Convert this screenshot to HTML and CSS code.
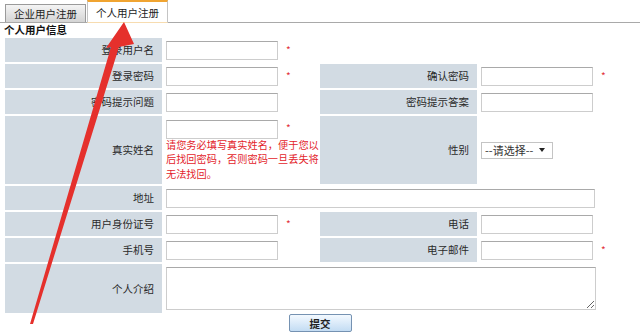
FILE: index.html
```html
<!DOCTYPE html>
<html lang="zh-CN">

<head>
    <meta charset="UTF-8">
    <meta name="viewport" content="width=device-width, initial-scale=1.0">
    <title>个人用户注册</title>
    <link rel="stylesheet" href="styles.css">
</head>

<body>
    <div class="tabs">
        <span class="tab">企业用户注册</span>
        <span class="tab active">个人用户注册</span>
    </div>
    <h4 class="title">个人用户信息</h4>

    <table class="reg-form">
        <colgroup>
            <col class="c-label">
            <col class="c-field">
            <col class="c-label">
            <col class="c-field2">
        </colgroup>
        <tr>
            <td class="label">登录用户名</td>
            <td class="field"><input type="text"><span class="star">*</span></td>
            <td colspan="2"></td>
        </tr>
        <tr>
            <td class="label">登录密码</td>
            <td class="field"><input type="password"><span class="star">*</span></td>
            <td class="label">确认密码</td>
            <td class="field"><input type="password"><span class="star">*</span></td>
        </tr>
        <tr>
            <td class="label">密码提示问题</td>
            <td class="field"><input type="text"></td>
            <td class="label">密码提示答案</td>
            <td class="field"><input type="text"></td>
        </tr>
        <tr class="tall">
            <td class="label">真实姓名</td>
            <td class="field top">
                <input type="text"><span class="star">*</span>
                <div class="hint">请您务必填写真实姓名，便于您以后找回密码，否则密码一旦丢失将无法找回。</div>
            </td>
            <td class="label">性别</td>
            <td class="field">
                <span class="select-wrap">
                    <select>
                        <option>--请选择--</option>
                        <option>男</option>
                        <option>女</option>
                    </select>
                </span>
            </td>
        </tr>
        <tr>
            <td class="label">地址</td>
            <td class="field" colspan="3"><input type="text" class="wide"></td>
        </tr>
        <tr>
            <td class="label">用户身份证号</td>
            <td class="field"><input type="text"><span class="star">*</span></td>
            <td class="label">电话</td>
            <td class="field"><input type="text"></td>
        </tr>
        <tr>
            <td class="label">手机号</td>
            <td class="field"><input type="text"></td>
            <td class="label">电子邮件</td>
            <td class="field"><input type="text"><span class="star">*</span></td>
        </tr>
        <tr class="intro">
            <td class="label">个人介绍</td>
            <td class="field" colspan="3"><textarea></textarea></td>
        </tr>
    </table>

    <button class="submit">提交</button>

    <!-- 标注箭头 -->
    <svg class="arrow" width="640" height="334" viewBox="0 0 640 334">
        <polygon fill="#e5302c"
            points="30,324 33,324 119,47 134,44 124,22 106,48 111,47" />
    </svg>
</body>

</html>
```

FILE: styles.css
```css
* {
    margin: 0;
    padding: 0;
    box-sizing: border-box;
}

body {
    position: relative;
    width: 640px;
    height: 334px;
    overflow: hidden;
    background-color: #fff;
    color: #2a2a2a;
    font-family: "Noto Sans CJK SC", "Liberation Sans", sans-serif;
    font-size: 10.5px;
    line-height: 14px;
}

.tabs {
    display: flex;
    align-items: flex-end;
    height: 23px;
    padding-left: 5px;
    gap: 1px;
    border-bottom: 1px solid #a9a9a9;
}

.tab {
    width: 81px;
    height: 18px;
    line-height: 17px;
    text-align: center;
    color: #222;
    border: 1px solid #9a9a9a;
    border-bottom: 0;
    background: linear-gradient(#f4f4f4, #d4d4d4);
}

.tab.active {
    height: 23px;
    line-height: 21px;
    margin-bottom: -1px;
    border-color: #c4c4c4;
    border-top: 2px solid #f0a431;
    border-bottom: 1px solid #f7dcb0;
    background: #fff;
}

.title {
    height: 13px;
    line-height: 13px;
    padding-left: 4px;
    font-size: 10.5px;
    font-weight: bold;
    color: #111;
}

.reg-form {
    width: 631px;
    margin-left: 5px;
    table-layout: fixed;
    border-collapse: separate;
    border-spacing: 0 2px;
}

.c-label {
    width: 157px;
}

.c-field {
    width: 158px;
}

.c-field2 {
    width: 159px;
}

.reg-form td {
    height: 24px;
    vertical-align: middle;
}

.reg-form .label {
    background-color: #d2dbe3;
    text-align: right;
    padding-right: 8px;
}

.reg-form .field {
    padding-left: 4px;
    line-height: 19px;
    white-space: nowrap;
}

.reg-form .tall td {
    height: 68px;
}

.reg-form .field.top {
    vertical-align: top;
    padding-top: 2px;
    white-space: normal;
}

.reg-form .intro td {
    height: 49px;
}

input,
textarea,
select {
    font-family: inherit;
    font-size: 10.5px;
    color: #333;
    outline: none;
    background: #fff;
    border: 1px solid #cdcdcd;
    border-top-color: #a9a9a9;
}

input {
    width: 112px;
    height: 19px;
    vertical-align: middle;
}

input.wide {
    width: 429px;
}

.star {
    display: inline-block;
    margin-left: 8px;
    color: #e2303a;
    font-size: 10px;
    line-height: 10px;
    vertical-align: 0;
}

.hint {
    width: 154px;
    margin-top: -1px;
    color: #e3242b;
    font-size: 10.2px;
    line-height: 14.5px;
}

.select-wrap {
    position: relative;
    display: inline-block;
    vertical-align: middle;
}

select {
    appearance: none;
    -webkit-appearance: none;
    width: 72px;
    height: 17px;
    padding-left: 3px;
    line-height: 15px;
    font-size: 11px;
    border-color: #c4c4c4;
}

.select-wrap::after {
    content: "";
    position: absolute;
    right: 8px;
    top: 7px;
    border-left: 3.5px solid transparent;
    border-right: 3.5px solid transparent;
    border-top: 4px solid #222;
}

textarea {
    display: block;
    width: 430px;
    height: 43px;
    resize: both;
}

.submit {
    display: block;
    width: 63px;
    height: 18px;
    margin: -1px auto 0;
    border: 1px solid #7592b2;
    border-radius: 2px;
    background: linear-gradient(#f3f9ff, #c3dcf3);
    font-family: inherit;
    font-size: 10.5px;
    font-weight: bold;
    color: #222;
    line-height: 15px;
    cursor: pointer;
}

.arrow {
    position: absolute;
    left: 0;
    top: 0;
    pointer-events: none;
}
```
